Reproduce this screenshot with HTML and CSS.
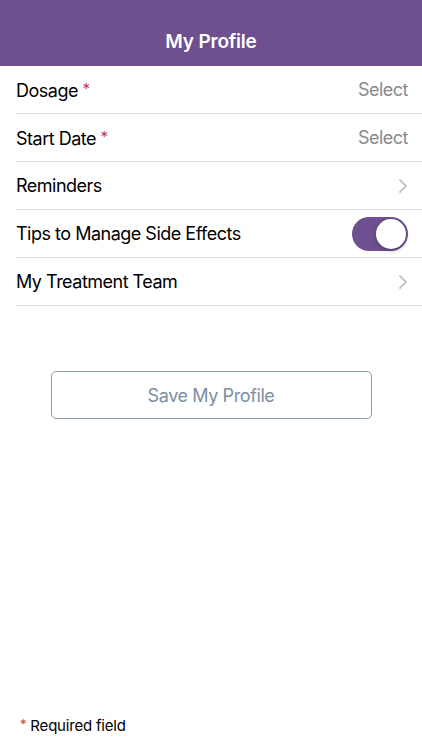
FILE: index.html
```html
<!DOCTYPE html>
<html>
<head>
<meta charset="utf-8">
<link rel="stylesheet" href="styles.css">
</head>
<body>
<div class="screen">
  <header class="nav"><h1 class="nav-title">My Profile</h1></header>
  <ul class="list">
    <li class="row"><span class="label">Dosage <span class="req">*</span></span><span class="value">Select</span></li>
    <li class="row"><span class="label">Start Date <span class="req">*</span></span><span class="value">Select</span></li>
    <li class="row"><span class="label">Reminders</span>
      <svg class="chev" width="10" height="16" viewBox="0 0 10 16"><path d="M2 2l6 6-6 6" fill="none" stroke="#c4c4c8" stroke-width="1.8" stroke-linecap="round" stroke-linejoin="round"/></svg></li>
    <li class="row"><span class="label">Tips to Manage Side Effects</span><span class="toggle"><span class="knob"></span></span></li>
    <li class="row"><span class="label">My Treatment Team</span>
      <svg class="chev" width="10" height="16" viewBox="0 0 10 16"><path d="M2 2l6 6-6 6" fill="none" stroke="#c4c4c8" stroke-width="1.8" stroke-linecap="round" stroke-linejoin="round"/></svg></li>
  </ul>
  <div class="actions"><button class="save">Save My Profile</button></div>
  <footer class="foot"><span class="req">*</span> Required field</footer>
</div>
</body>
</html>
```
FILE: styles.css
```css
* { box-sizing: border-box; }
html, body { margin: 0; padding: 0; background: #fff; }
body { font-family: Inter, "Noto Sans", sans-serif; color: #000; }
.screen { width: 422px; height: 750px; display: flex; flex-direction: column; }
.nav { height: 66px; background: #6e4f8f; display: flex; align-items: flex-end; justify-content: center; padding-bottom: 13px; }
.nav-title { margin: 0; color: #fff; font-size: 19px; font-weight: 600; letter-spacing: -0.2px; }
.list { list-style: none; margin: 0; padding: 0 0 0 16px; }
.row { height: 48px; display: flex; align-items: center; justify-content: space-between; border-bottom: 1px solid #e2e2e4; padding-right: 14px; font-size: 18px; letter-spacing: -0.5px; }
.req { color: #d0383d; font-size: 15px; vertical-align: 3px; }
.value { color: #8a8a8e; }
.chev { margin-right: 0; }
.toggle { width: 56px; height: 34px; border-radius: 17px; background: #6e4f8f; position: relative; display: block; }
.knob { position: absolute; right: 2px; top: 2px; width: 30px; height: 30px; border-radius: 50%; background: #fff; box-shadow: 0 2px 4px rgba(0,0,0,0.25); }
.actions { display: flex; justify-content: center; padding-top: 65px; }
.save { width: 321px; height: 48px; border: 1.5px solid #8d9db0; border-radius: 5px; background: #fff; color: #7b8ea3; font-family: inherit; font-size: 18px; letter-spacing: -0.4px; }
.foot { margin-top: auto; padding: 0 0 15px 20px; font-size: 15px; letter-spacing: -0.2px; }
.foot .req { vertical-align: 2px; font-size: 13px; }
```
